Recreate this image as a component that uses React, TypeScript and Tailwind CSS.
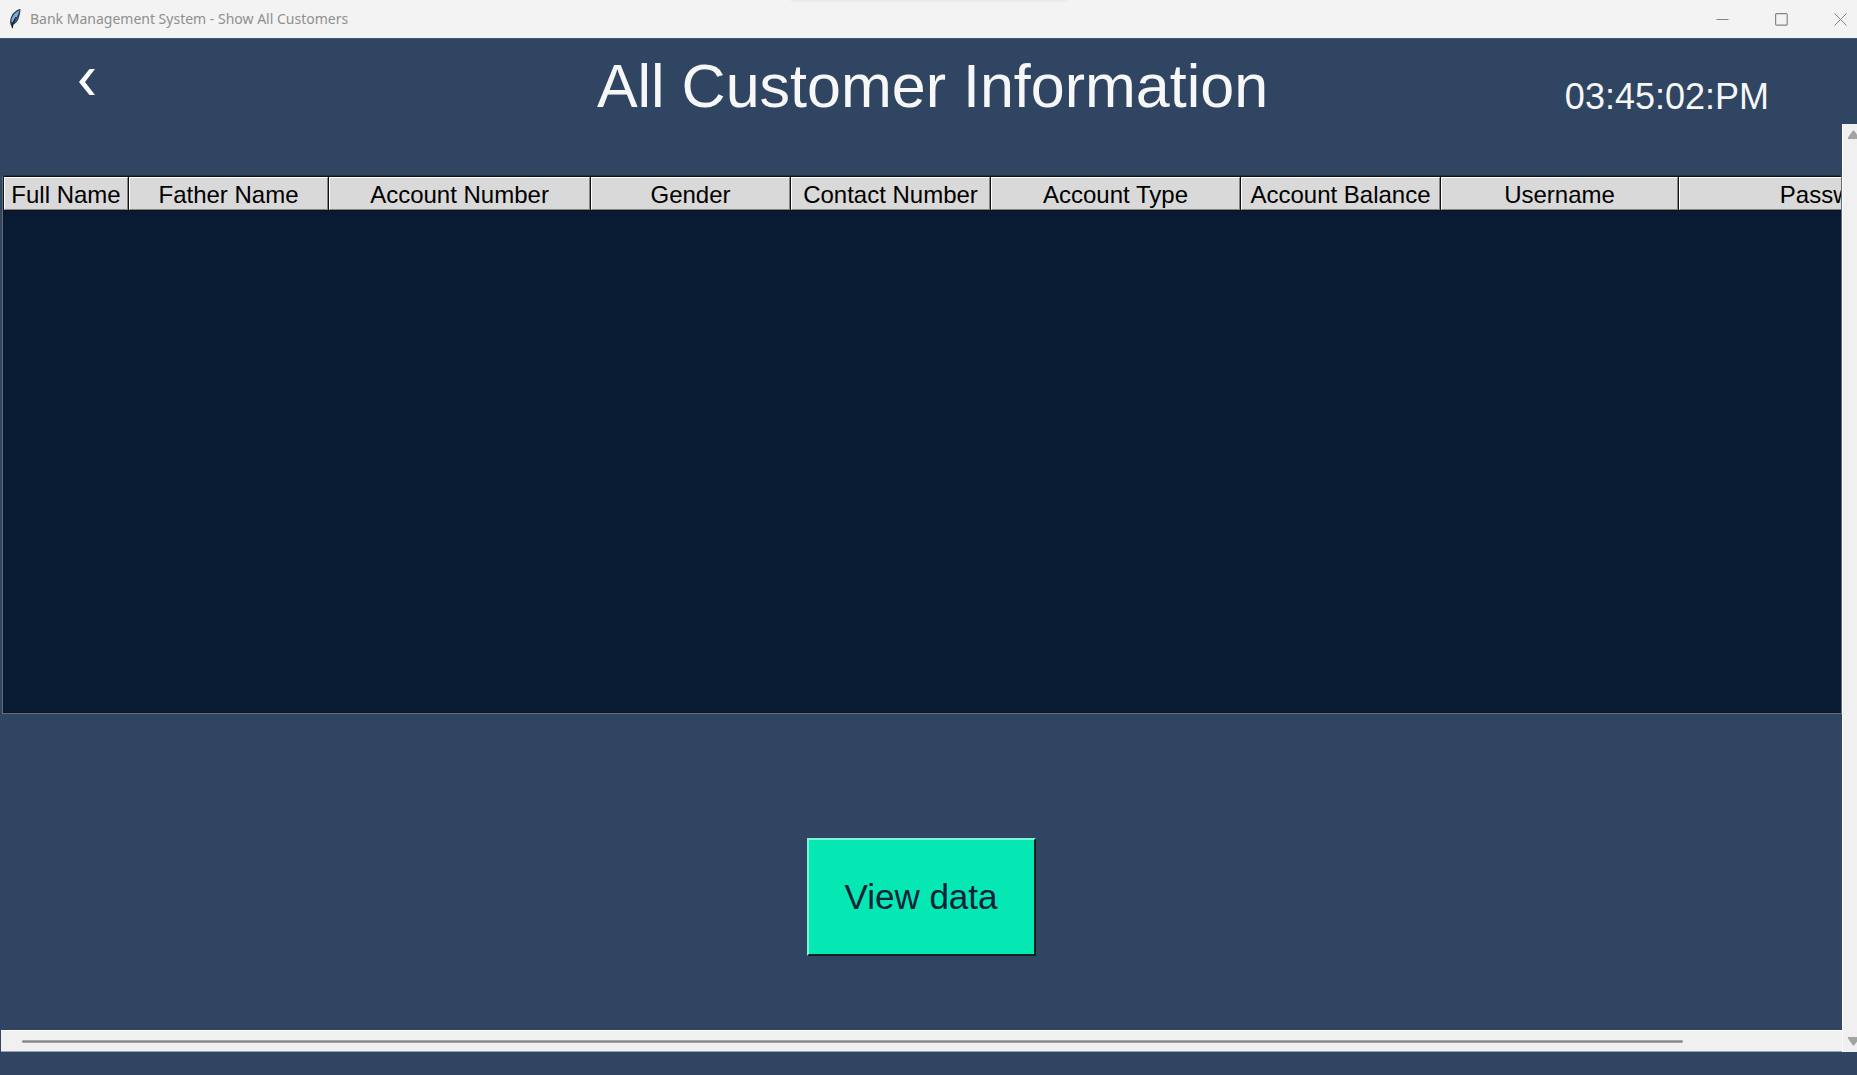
import React from "react";

const columns = [
  { label: "Full Name", width: 125 },
  { label: "Father Name", width: 200 },
  { label: "Account Number", width: 262 },
  { label: "Gender", width: 200 },
  { label: "Contact Number", width: 200 },
  { label: "Account Type", width: 250 },
  { label: "Account Balance", width: 200 },
  { label: "Username", width: 238 },
  { label: "Password", width: 308 },
];

const tableWidth = columns.reduce((sum, c) => sum + c.width, 0);

function Feather() {
  return (
    <svg width="14" height="22" viewBox="0 0 14 22" aria-hidden="true">
      <path
        d="M12.4 1C9 1.6 5.2 4.4 3.4 8.2C2.2 11 1.6 14 2.6 16.4L4.6 21L5 17C8 15.6 10.2 12.6 11 9.6C11.6 7 12.6 4 12.4 1Z"
        fill="#2a3442"
      />
      <path
        d="M11.6 2.2C8.4 3.4 5.2 6.4 4 9.8C3.4 11.6 3.2 13.4 3.6 14.8C6.6 12.6 9.8 8.6 11.6 2.2Z"
        fill="#78abe0"
      />
      <path
        d="M11.6 3.4C10.4 8 8 12.4 5 15.6C7.6 14.4 9.4 12 10.2 9.2Z"
        fill="#3c6ca8"
      />
      <path d="M8 9C6.4 11.6 4.8 14.4 4.4 20" fill="none" stroke="#12161d" strokeWidth="1" />
    </svg>
  );
}

function TitleBar() {
  return (
    <header className="relative flex h-[38px] shrink-0 items-center justify-between bg-[#f3f3f3] pl-2">
      <div className="absolute left-1/2 top-0 h-[3px] w-[276px] -translate-x-1/2 bg-linear-to-b from-[#e8e8e8] to-[#f3f3f3]" />
      <div className="flex items-center gap-2 pb-px">
        <Feather />
        <span className="font-['Noto_Sans','Open_Sans',sans-serif] text-[14px] leading-5 text-[#8f8f8f]">
          Bank Management System - Show All Customers
        </span>
      </div>
      <div className="flex gap-[46px] pr-[10px] text-[#858585]">
        <button type="button" aria-label="Minimize">
          <svg width="13" height="13" viewBox="0 0 13 13" aria-hidden="true">
            <path d="M0.5 6.5H12.5" stroke="currentColor" />
          </svg>
        </button>
        <button type="button" aria-label="Maximize">
          <svg width="13" height="13" viewBox="0 0 13 13" fill="none" aria-hidden="true">
            <rect x="0.6" y="0.6" width="11.6" height="11.6" rx="1" stroke="currentColor" strokeWidth="1.2" />
          </svg>
        </button>
        <button type="button" aria-label="Close">
          <svg width="13" height="13" viewBox="0 0 13 13" aria-hidden="true">
            <path d="M0.5 0.5L12.5 12.5M12.5 0.5L0.5 12.5" stroke="currentColor" />
          </svg>
        </button>
      </div>
    </header>
  );
}

function CustomerTable() {
  return (
    <div className="ml-[2px] mt-[50px] h-[539px] overflow-hidden border border-[#5d6c80] border-t-[#26323f] bg-[#091b33]">
      <div className="h-full overflow-hidden border border-r-0 border-[#10151c]">
        <table
          className="table-fixed border-separate border-spacing-0"
          style={{ width: tableWidth }}
        >
          <colgroup>
            {columns.map((c) => (
              <col key={c.label} style={{ width: c.width }} />
            ))}
          </colgroup>
          <thead>
            <tr>
              {columns.map((c) => (
                <th
                  key={c.label}
                  scope="col"
                  className="border-b border-r border-[#111111] p-0 font-normal"
                >
                  <div className="h-[33px] whitespace-nowrap border border-b-[#858585] border-l-white border-r-[#858585] border-t-white bg-[#d9d9d9] text-center text-[24px] leading-[33px] text-black">
                    {c.label}
                  </div>
                </th>
              ))}
            </tr>
          </thead>
          <tbody />
        </table>
      </div>
    </div>
  );
}

export default function App() {
  return (
    <div className="flex min-h-screen flex-col overflow-hidden bg-[#304562] font-['Liberation_Sans',Arial,sans-serif]">
      <TitleBar />
      <div className="grid h-[86px] grid-cols-[1fr_auto_1fr] border-t border-[#3b5674]">
        <div className="pl-[79px] pt-[30px]">
          <button type="button" aria-label="Back" className="block">
            <svg width="16" height="26" viewBox="0 0 16 26" aria-hidden="true">
              <path d="M10.5 0H16L6 13L16 26H10.5L0 13Z" fill="#ffffff" />
            </svg>
          </button>
        </div>
        <h1 className="pl-2 pt-3 text-[61px] leading-[70px] text-[#f7f7f7]">
          All Customer Information
        </h1>
        <time className="pr-[88px] pt-[37px] text-right text-[36px] leading-[42px] text-[#f7f7f7]">
          03:45:02:PM
        </time>
      </div>

      <div className="flex grow">
        <main className="flex min-w-0 grow flex-col pt-px">
          <CustomerTable />
          <div className="flex grow items-start justify-center pt-[124px]">
            <button
              type="button"
              className="h-[118px] w-[229px] border-2 border-b-[#06231f] border-l-[#7df5d8] border-r-[#06231f] border-t-[#7df5d8] bg-[#06e8b3] text-[35px] text-[#0a2138]"
            >
              View data
            </button>
          </div>
          <div className="ml-px flex h-[22px] items-center border-b border-t border-b-[#9aa3af] border-t-white bg-[#f0f0f0] pl-[21px] pr-[159px]">
            <div className="h-[3px] grow rounded-full border-y border-[#a5a5a5] bg-[#858585]" />
          </div>
        </main>
        <aside className="flex w-[15px] shrink-0 flex-col justify-between overflow-hidden border-l border-white bg-[#f0f0f0] py-[6px] pl-[5px] text-[#a3a3a3]">
          <svg className="shrink-0" width="11" height="9" viewBox="0 0 11 9" aria-hidden="true">
            <path d="M0 7.5L4.5 1Q5.5 0 6.5 1L11 7.5V9H0Z" fill="currentColor" />
          </svg>
          <svg className="shrink-0" width="11" height="9" viewBox="0 0 11 9" aria-hidden="true">
            <path d="M0 1.5L4.5 8Q5.5 9 6.5 8L11 1.5V0H0Z" fill="currentColor" />
          </svg>
        </aside>
      </div>
      <footer className="h-[23px] shrink-0" />
    </div>
  );
}
